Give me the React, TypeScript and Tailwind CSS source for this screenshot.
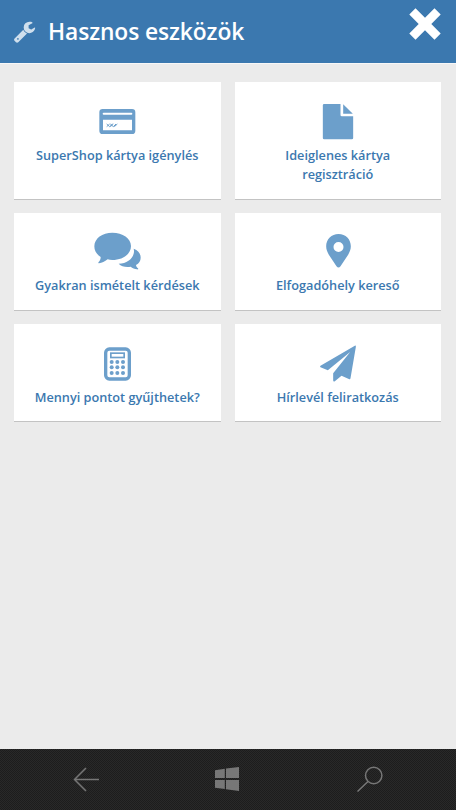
import type { ReactNode } from 'react';

interface Tool {
  label: string;
  icon: ReactNode;
}

function WrenchIcon() {
  return (
    <svg viewBox="0 0 1792 1792" className="h-[23px] w-[23px] text-[#cfdfed]" fill="currentColor">
      <path d="M448 1472q0-26-19-45t-45-19-45 19-19 45 19 45 45 19 45-19 19-45zm644-420l-682 682q-37 37-90 37-52 0-91-37l-106-108q-38-36-38-90 0-53 38-91l681-681q39 98 114.5 173.5t173.5 114.5zm634-435q0 39-23 106-47 134-164.5 217.5t-258.5 83.5q-185 0-316.5-131.5t-131.5-316.5 131.5-316.5 316.5-131.5q58 0 121.5 16.5t107.5 46.5q16 11 16 28t-16 28l-293 169v224l193 107q5-3 79-48.5t135.5-81 70.5-35.5q15 0 23.5 10t8.5 25z" />
    </svg>
  );
}

function CardIcon() {
  return (
    <svg viewBox="-9 0 180 150" className="h-[50px] w-[60px]" fill="currentColor">
      <path fillRule="evenodd" d="M38 42H126Q136 42 136 52V107Q136 117 126 117H38Q28 117 28 107V52Q28 42 38 42ZM41 53Q38 53 38 56Q38 59 41 59H124Q127 59 127 56Q127 53 124 53ZM39 74V106H126V74Z" />
      <path d="M50 87L59 95L67 87M50 95L59 87M61 87L70 95L78 87M61 95L70 87M73 95L82 87" fill="none" stroke="currentColor" strokeWidth="3" />
    </svg>
  );
}

function FileIcon() {
  return (
    <svg viewBox="-6.5 0 180 150" className="h-[50px] w-[60px]" fill="currentColor">
      <path d="M42 27H91V60Q91 64 95 64H129V129Q129 133 125 133H42Q38 133 38 129V30Q38 27 42 27Z" />
      <path d="M99 28L128 56H99Z" />
    </svg>
  );
}

function CommentsIcon() {
  return (
    <svg viewBox="0 3 195 150" className="h-[50px] w-[65px]" fill="currentColor">
      <path d="M82 26C113 26 138 43 138 66C138 91 113 108 82 108C77 108 72 107 68 106C59 113 51 117 42 118C40 118 39 116 41 114C45 110 47 106 47 99C34 91 28 80 28 67C28 43 52 26 82 26Z" />
      <path d="M146 74C160 79 167 89 167 101C167 110 162 118 153 123C154 128 156 131 159 133C161 136 159 137 156 136C149 135 142 132 137 128C123 131 109 127 101 119C127 119 145 103 147 84C147 80 147 77 146 74Z" />
    </svg>
  );
}

function PinIcon() {
  return (
    <svg viewBox="-6.5 3 180 150" className="h-[50px] w-[60px]" fill="currentColor">
      <path fillRule="evenodd" d="M85 30C107 30 122 46 122 67C122 77 118 85 114 92L91 127Q85 134 79 127L56 92C52 85 48 77 48 67C48 46 64 30 85 30ZM85 54A15 15 0 1 0 85 84A15 15 0 1 0 85 54Z" />
    </svg>
  );
}

function CalculatorIcon() {
  return (
    <svg viewBox="-9 5 180 150" className="h-[50px] w-[60px]" fill="currentColor">
      <rect x="47" y="41" width="71" height="90" rx="11" fill="none" stroke="currentColor" strokeWidth="10" />
      <rect x="62.5" y="53.5" width="40" height="13" fill="none" stroke="currentColor" strokeWidth="5" />
      {[80, 96, 113].map((y) =>
        [65, 82, 99].map((x) => <circle key={`${x}-${y}`} cx={x} cy={y} r="6" />)
      )}
    </svg>
  );
}

function PlaneIcon() {
  return (
    <svg viewBox="-6.5 5 180 150" className="h-[50px] w-[60px]" fill="currentColor">
      <path d="M31 91L134 31Q138 30 137 35L121 129Q120 133 116 131L94 121L74 138Q69 140 69 135V114L120 50L53 105L31 96Q28 94 31 91Z" />
    </svg>
  );
}

const tools: Tool[] = [
  { label: 'SuperShop kártya igénylés', icon: <CardIcon /> },
  { label: 'Ideiglenes kártya regisztráció', icon: <FileIcon /> },
  { label: 'Gyakran ismételt kérdések', icon: <CommentsIcon /> },
  { label: 'Elfogadóhely kereső', icon: <PinIcon /> },
  { label: 'Mennyi pontot gyűjthetek?', icon: <CalculatorIcon /> },
  { label: 'Hírlevél feliratkozás', icon: <PlaneIcon /> },
];

function ToolCard({ label, icon }: Tool) {
  return (
    <button className="flex flex-col items-center border-b border-[#c3c3c3] bg-white px-4 pt-[12.6px] pb-[14.6px] text-[#3b78af]">
      <span className="text-[#6c9fcb]">{icon}</span>
      <span className="mt-[1px] max-w-[172px] text-center text-[12.72px] leading-[19px] font-semibold">{label}</span>
    </button>
  );
}

export default function App() {
  return (
    <div className="flex h-screen flex-col bg-[#ebebeb] font-['Open_Sans',sans-serif]">
      <header className="flex h-[63px] shrink-0 items-center bg-[#3b78af] pl-[13px] text-white">
        <WrenchIcon />
        <h1 className="mt-[1px] ml-3 text-[22.8px] leading-8 font-semibold tracking-[-0.1px]">Hasznos eszközök</h1>
        <button aria-label="Bezárás" className="mr-[15px] mb-[15px] ml-auto">
          <svg viewBox="0 0 32 32" className="h-8 w-8" fill="currentColor">
            <path d="M6.5 0.3L16 9.7L25.5 0.3L31.7 6.5L22.3 16L31.7 25.5L25.5 31.7L16 22.3L6.5 31.7L0.3 25.5L9.7 16L0.3 6.5Z" />
          </svg>
        </button>
      </header>

      <main className="flex-1 border-t border-[#f7f7f7] pt-[18.4px] pr-[15px] pl-[14px]">
        <div className="grid grid-cols-2 gap-x-[14px] gap-y-[13.2px]">
          {tools.map((tool) => (
            <ToolCard key={tool.label} {...tool} />
          ))}
        </div>
      </main>

      <nav className="flex h-[61px] shrink-0 items-center bg-[#222] bg-[repeating-conic-gradient(#1d1d1d_0_25%,#292929_0_50%)] bg-[length:2px_2px] pb-[2px] text-[#777]">
        <button aria-label="Vissza" className="ml-[73px]">
          <svg viewBox="0 0 27 26" className="h-[26px] w-[27px]" fill="none" stroke="currentColor" strokeWidth="1.5">
            <path d="M26 13.5H1.5M13 2L1.5 13.5L13 25" />
          </svg>
        </button>
        <button aria-label="Start" className="ml-[115px]">
          <svg viewBox="0 0 24 24" className="h-6 w-6" fill="currentColor">
            <path d="M0 3.2L9.8 1.8V11H0ZM11 1.6L24 0V11H11ZM0 13H9.8V22.1L0 20.8ZM11 13H24V24L11 22.3Z" />
          </svg>
        </button>
        <button aria-label="Keresés" className="ml-[117px]">
          <svg viewBox="0 0 27 26" className="h-[26px] w-[27px]" fill="none" stroke="currentColor" strokeWidth="1.5">
            <circle cx="17.7" cy="9.5" r="8.2" />
            <path d="M12 15.5L1.5 25.5" />
          </svg>
        </button>
      </nav>
    </div>
  );
}
